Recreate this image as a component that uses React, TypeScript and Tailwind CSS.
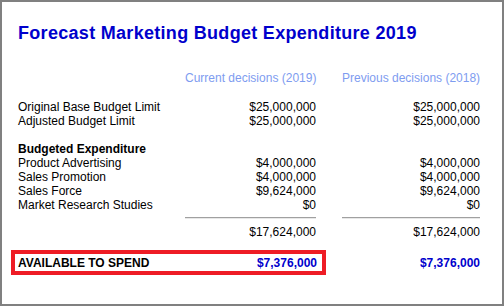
const rows = [
  { label: "Original Base Budget Limit", current: "$25,000,000", previous: "$25,000,000" },
  { label: "Adjusted Budget Limit", current: "$25,000,000", previous: "$25,000,000" },
];

const spend = [
  { label: "Product Advertising", current: "$4,000,000", previous: "$4,000,000" },
  { label: "Sales Promotion", current: "$4,000,000", previous: "$4,000,000" },
  { label: "Sales Force", current: "$9,624,000", previous: "$9,624,000" },
  { label: "Market Research Studies", current: "$0", previous: "$0" },
];

function Row({ label, current, previous }: { label: string; current: string; previous: string }) {
  return (
    <div className="grid grid-cols-[167px_131px_26px_138px] h-[14px]">
      <div>{label}</div>
      <div className="text-right">{current}</div>
      <div />
      <div className="text-right">{previous}</div>
    </div>
  );
}

export default function App() {
  return (
    <div
      className="w-[504px] h-[306px] bg-white border-2 border-[#808080] pl-[16px] pt-[21px] text-[12px] leading-[14px] text-black"
      style={{ fontFamily: '"Liberation Sans", Arial, sans-serif' }}
    >
      <h1 className="text-[18px] leading-[20px] font-bold tracking-[0.3px] text-[#0000cc]">
        Forecast Marketing Budget Expenditure 2019
      </h1>

      {/* column headers */}
      <div className="grid grid-cols-[167px_131px_26px_138px] h-[14px] mt-[28px] text-[#7e9cf0]">
        <div />
        <div className="text-right whitespace-nowrap">Current decisions (2019)</div>
        <div />
        <div className="text-right whitespace-nowrap">Previous decisions (2018)</div>
      </div>

      <div className="mt-[15px]">
        {rows.map((r) => (
          <Row key={r.label} {...r} />
        ))}
        <div className="h-[14px]" />
        <div className="h-[14px] font-bold">Budgeted Expenditure</div>
        {spend.map((r) => (
          <Row key={r.label} {...r} />
        ))}
      </div>

      {/* subtotal rules */}
      <div className="grid grid-cols-[167px_131px_26px_138px] mt-[5px]">
        <div />
        <div className="border-t border-t-[#a0a0a0] border-b border-b-[#e8e8e8]" />
        <div />
        <div className="border-t border-t-[#a0a0a0] border-b border-b-[#e8e8e8]" />
      </div>

      <div className="mt-[6px]">
        <Row label="" current="$17,624,000" previous="$17,624,000" />
      </div>

      {/* available to spend */}
      <div className="flex items-center mt-[11px] font-bold">
        <div className="ml-[-7px] w-[315px] h-[25px] border-4 border-[#ee1c25] flex items-center justify-between pl-[3px] pr-[5px]">
          <span>AVAILABLE TO SPEND</span>
          <span className="text-[#0000cc]">$7,376,000</span>
        </div>
        <div className="w-[154px] text-right text-[#0000cc]">$7,376,000</div>
      </div>
    </div>
  );
}
